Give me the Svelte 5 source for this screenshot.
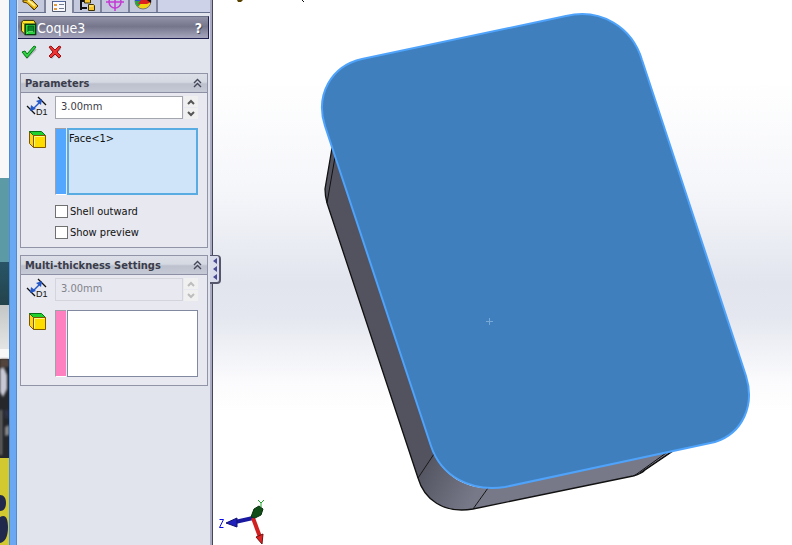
<script lang="ts">
    const tabs = ['Feature tree', 'Properties', 'Configurations', 'Dimensions', 'Appearances'];

    let activeTab = $state(1);
    let thickness = $state('3.00mm');
    let multiThickness = $state('3.00mm');
    let faces = $state(['Face<1>']);
    let shellOutward = $state(false);
    let showPreview = $state(false);
    let paramsOpen = $state(true);
    let multiOpen = $state(true);

    function step(delta: number) {
        const next = Math.max(0, (parseFloat(thickness) || 0) + delta);
        thickness = next.toFixed(2) + 'mm';
    }
</script>

{#snippet tabIcon(i: number)}
    <svg class="tab-icon" viewBox="0 0 20 12" aria-hidden="true">
        {#if i === 0}
            <path d="M2 0v2l4 1 7 7 4-4-6-6z" fill="#efbd18" stroke="#4d3500" />
            <path d="M7 0l7 6" stroke="#fff0a0" stroke-width="2" />
            <path d="M6 3l7 6" stroke="#8b6200" />
        {:else if i === 1}
            <path d="M3.500 -3h13v13.500h-13z" fill="#f8f8ff" stroke="#555b6e" />
            <path d="M4 0h12" stroke="#5268a0" stroke-width="2" />
            <path d="M5 3h3v2H5zM5 7h3v2H5z" fill="#e19a3c" />
            <path d="M10 3.500h5M10 7.500h5" stroke="#777d91" />
        {:else if i === 2}
            <path d="M4 -2v12M4 1h4M4 8h6" stroke="#111" stroke-width="2" fill="none" />
            <path d="M7.500 -2h5l1 1v4h-6zM11.500 4.500h5l1 1v5h-6z" fill="#f6c52c" stroke="#3c3000" />
            <path d="M12 6h4" stroke="#fff3a8" />
        {:else if i === 3}
            <circle cx="10" cy="2" r="6" fill="none" stroke="#c43bd4" stroke-width="1.500" />
            <path d="M10 -6v17M1 2h18" stroke="#c43bd4" stroke-width="1.500" />
        {:else}
            <circle cx="10" cy="1" r="8" fill="#f4d313" stroke="#777" />
            <path d="M10 1L2 1a8 8 0 0 0 3 6z" fill="#28a53d" />
            <path d="M2 1V-5h8v6z" fill="#2a55d4" />
            <path d="M5 4l5-7 8 5-4 2z" fill="#dc2020" />
            <path d="M11 -2l7 5V-3z" fill="#111" />
        {/if}
    </svg>
{/snippet}

{#snippet dimensionIcon()}
    <svg class="row-icon" viewBox="0 0 20 21" aria-hidden="true">
        <path d="M11 1l8 8M0 10l8 8" stroke="#111" stroke-width="1.300" />
        <path d="M5 14L14 5" stroke="#2458c8" stroke-width="1.500" />
        <path d="M15 3l-1 6-5-4zM3 15l1-6 5 4z" fill="#2458c8" />
        <text x="9" y="19" class="icon-text">D1</text>
    </svg>
{/snippet}

{#snippet cubeIcon()}
    <svg class="row-icon cube" viewBox="0 0 20 21" aria-hidden="true">
        <path d="M2.500 3.500l4 4v12l-4-4z" fill="#ffd51c" stroke="#805600" />
        <path d="M2.500 3.500h12l4 4h-12z" fill="#20d02c" stroke="#087018" />
        <path d="M6.500 7.500h12v12h-12z" fill="#ffdc00" stroke="#805600" />
        <path d="M7.500 18.500v-10h10" fill="none" stroke="#fff78a" />
    </svg>
{/snippet}

{#snippet chevrons()}
    <svg class="chevrons" viewBox="0 0 9 10" aria-hidden="true">
        <path d="M1 5l3.500-3.500L8 5M1 9l3.500-3.500L8 9" fill="none" stroke="#444859" stroke-width="1.400" />
    </svg>
{/snippet}

{#snippet spinner(disabled: boolean)}
    <div class="spinner">
        <button aria-label="Increase" {disabled} onclick={() => step(1)}>
            <svg viewBox="0 0 8 6"><path d="M1 5l3-3 3 3" /></svg>
        </button>
        <button aria-label="Decrease" {disabled} onclick={() => step(-1)}>
            <svg viewBox="0 0 8 6"><path d="M1 1l3 3 3-3" /></svg>
        </button>
    </div>
{/snippet}

<div class="app">
    <div class="desktop" aria-hidden="true">
        <svg viewBox="0 0 9 545" preserveAspectRatio="none">
            <defs>
                <linearGradient id="sea" x2="0" y2="1">
                    <stop stop-color="#285567" /><stop offset="1" stop-color="#24434b" />
                </linearGradient>
                <linearGradient id="haze" x2="0" y2="1">
                    <stop stop-color="#c4c7c7" /><stop offset="1" stop-color="#e4e4e4" />
                </linearGradient>
                <filter id="soft"><feGaussianBlur stdDeviation="1" /></filter>
            </defs>
            <path d="M0 0h9v545H0z" fill="#f8f8f8" />
            <path d="M0 178h9v84H0z" fill="#5c9aa6" />
            <path d="M0 262h9v43H0z" fill="url(#sea)" />
            <path d="M0 305h9v44H0z" fill="url(#haze)" />
            <path d="M0 359h9v99H0z" fill="#25272b" />
            <g filter="url(#soft)">
                <path d="M0 359h9v8H4l-4 5z" fill="#53443d" />
                <path d="M0 369l4-1 3 7v14l-4 8-3-5z" fill="#c8c8d4" />
                <path d="M0 410h2v45H0z" fill="#74756f" />
                <path d="M5 427l4-2v10l-4 1z" fill="#8b8b8d" />
                <path d="M4 410h5v8H5z" fill="#303044" />
            </g>
            <path d="M0 458h9v87H0z" fill="#d2c931" />
            <path d="M0 495c4 0 6 3 6 8s-2 8-6 8zM0 517c5-3 8 0 8 10s-3 15-8 16z" fill="#20294b" />
        </svg>
    </div>
    <div class="window-edge"></div>

    <aside class="panel">
        <div class="tabs" role="tablist">
            {#each tabs as tab, i}
                <button role="tab" class="tab" class:active={activeTab === i} aria-selected={activeTab === i} aria-label={tab} onclick={() => (activeTab = i)}>
                    {@render tabIcon(i)}
                </button>
            {/each}
        </div>

        <header class="title">
            <svg class="title-icon" viewBox="0 0 18 18" aria-hidden="true">
                <path d="M1.500 3.500l2-2h11l2 3v12h-11l-4-4z" fill="#ffe52b" stroke="#262500" />
                <path d="M2 3.500l3 2v10" fill="none" stroke="#b29700" />
                <path d="M5.500 5.500h11v11h-11z" fill="#26d83e" stroke="#063910" stroke-width="1.500" />
                <path d="M8.500 7.500h6v6h-6z" fill="#08862a" stroke="#07551b" />
                <path d="M7 15.500l2-2h5" fill="none" stroke="#8bff88" />
            </svg>
            <h1>Coque3</h1>
            <button class="help" aria-label="Help">?</button>
        </header>

        <div class="actions">
            <button aria-label="OK">
                <svg viewBox="0 0 16 14">
                    <path d="M3 9l3 4 9-9" fill="none" stroke="#b4b7c0" stroke-width="2" />
                    <path d="M1 7l3-1 2 3 7-8 2 1-9 11z" fill="#32d342" stroke="#08771a" />
                </svg>
            </button>
            <button aria-label="Cancel">
                <svg viewBox="0 0 16 14">
                    <path d="M4 3l9 10M13 3L4 13" stroke="#b4b7c0" stroke-width="3" />
                    <path d="M2 2l2-1 4 4 4-4 2 1-4 5 4 4-2 2-4-4-4 4-2-2 4-4z" fill="#ed3434" stroke="#981010" />
                </svg>
            </button>
        </div>

        <section class="group">
            <button class="group-head" aria-expanded={paramsOpen} onclick={() => (paramsOpen = !paramsOpen)}>
                <span>Parameters</span>
                {@render chevrons()}
            </button>
            {#if paramsOpen}
                <div class="group-body">
                    <div class="row">
                        {@render dimensionIcon()}
                        <div class="field">
                            <input type="text" aria-label="Thickness" bind:value={thickness} />
                            {@render spinner(false)}
                        </div>
                    </div>
                    <div class="row">
                        {@render cubeIcon()}
                        <div class="selection">
                            <div class="swatch blue"></div>
                            <ul class="list focused" role="listbox" aria-label="Faces to remove">
                                {#each faces as face}
                                    <li role="option" aria-selected="false">{face}</li>
                                {/each}
                            </ul>
                        </div>
                    </div>
                    <div class="checks">
                        <label><input type="checkbox" bind:checked={shellOutward} />Shell outward</label>
                        <label><input type="checkbox" bind:checked={showPreview} />Show preview</label>
                    </div>
                </div>
            {/if}
        </section>

        <section class="group">
            <button class="group-head" aria-expanded={multiOpen} onclick={() => (multiOpen = !multiOpen)}>
                <span>Multi-thickness Settings</span>
                {@render chevrons()}
            </button>
            {#if multiOpen}
                <div class="group-body">
                    <div class="row">
                        {@render dimensionIcon()}
                        <div class="field">
                            <input type="text" aria-label="Multi-thickness" bind:value={multiThickness} disabled />
                            {@render spinner(true)}
                        </div>
                    </div>
                    <div class="row">
                        {@render cubeIcon()}
                        <div class="selection">
                            <div class="swatch pink"></div>
                            <ul class="list" role="listbox" aria-label="Multi-thickness faces"></ul>
                        </div>
                    </div>
                </div>
            {/if}
        </section>

        <button class="collapse" aria-label="Collapse panel">
            <svg viewBox="0 0 4 22"><path d="M4 0v6L0 3zM4 8v6l-4-3zM4 16v6l-4-3z" fill="#4a4a96" /></svg>
        </button>
    </aside>

    <main class="viewport">
        <svg viewBox="213 0 579 545" preserveAspectRatio="xMinYMin slice" role="img" aria-label="Model view">
            <defs>
                <linearGradient id="corner" x1="420" y1="465" x2="475" y2="495" gradientUnits="userSpaceOnUse">
                    <stop stop-color="#52535f" /><stop offset="1" stop-color="#777989" />
                </linearGradient>
            </defs>

            <!-- remains of the view toolbar -->
            <path d="M237 0h6l-2 2h-3z" fill="#5a4300" />
            <path d="M302 0l2 2" stroke="#111" />

            <!-- body sides -->
            <path d="M332 148L325 189Q325 196 327 203L418 478L434 454L336 150z" fill="#52535f" />
            <path d="M434 454L418 478C424 499 443 514 473 509L488 488C464 488 444 475 434 454z" fill="url(#corner)" />
            <path d="M488 488L473 509L633 476Q641 474 645 470L673 451z" fill="#777989" />
            <path d="M332 148L325 189Q325 196 327 203L418 478C424 499 443 514 473 509L633 476Q641 474 645 470L673 451" fill="none" stroke="#111" stroke-width="1.300" />
            <path d="M335 157L327 203M434 454L418 478M488 488L473 509M666 453L634 476M671 452L640 473" fill="none" stroke="#111" />

            <!-- selected face -->
            <path
                d="M362 59L566 16C601 8 632 27 642 60L746 376C755 405 743 433 715 442L505 487C470 492 441 476 431 446L325 126C315 95 331 66 362 59z"
                fill="#3f7fbd" stroke="#4fa3fb" stroke-width="2"
            />
            <path d="M486 321.500h7M489.500 318v7" stroke="#78a8d7" />

            <!-- orientation triad -->
            <path d="M253 518L235 522" stroke="#1818a0" stroke-width="4" />
            <path d="M226 523l11-5v9z" fill="#2020bd" stroke="#101070" />
            <path d="M253 518l7 19" stroke="#d02020" stroke-width="4" />
            <path d="M256 537l7-3-1 10z" fill="#e02424" stroke="#761010" />
            <path d="M251 517l3-8 5-3 4 3-2 6-6 3z" fill="#124c19" stroke="#08310d" />
            <path d="M219.500 519.500h4l-4 8h4" fill="none" stroke="#0808e8" />
            <path d="M258 500l3 3 3-3M261 503v4" fill="none" stroke="#20a828" />
        </svg>
    </main>
</div>

<style>
    :global(body) {
        margin: 0;
    }

    .app {
        display: flex;
        min-height: 100vh;
        overflow: hidden;
        font-family: 'DejaVu Sans Condensed', Tahoma, sans-serif;
        font-size: 11px;
        color: #111;
    }

    button {
        padding: 0;
        border: 0;
        background: none;
        color: inherit;
        font: inherit;
    }

    svg {
        display: block;
    }

    .desktop {
        flex: 0 0 9px;
        position: relative;
    }

    .desktop svg {
        position: absolute;
        width: 100%;
        height: 100%;
    }

    .window-edge {
        flex: 0 0 6px;
        background: #6aa8f4;
        border: solid #4f8bd2;
        border-width: 0 1px;
    }

    .panel {
        position: relative;
        z-index: 1;
        box-sizing: border-box;
        flex: 0 0 196px;
        min-width: 0;
        padding: 0 2px 0 1px;
        background: #e1e4ed;
        border-right: 1px solid #46465a;
        box-shadow: inset -2px 0 #aaaac2;
    }

    .tabs {
        display: flex;
        height: 12px;
        background: #cdd2e8;
        border-bottom: 1px solid #64708e;
    }

    .tab {
        width: 28px;
        height: 12px;
        box-sizing: border-box;
        border-right: 2px solid #7d849c;
        background: #c4c9de;
        overflow: hidden;
    }

    .tab.active {
        height: 13px;
        background: #e1e4ed;
    }

    .tab-icon {
        width: 20px;
        height: 12px;
        margin: 0 auto;
    }

    .title {
        display: flex;
        align-items: center;
        box-sizing: border-box;
        height: 23px;
        margin: 3px 1px 0 0;
        padding: 0 6px 0 2px;
        border: solid #1c1c4e;
        border-width: 1px 1px 1px 0;
        border-top-color: #6b7088;
        background: linear-gradient(#9293a8, #75768c 45%, #a5a5bd);
        color: #fff;
    }

    .title-icon {
        width: 17px;
        height: 17px;
    }

    h1 {
        flex: 1;
        margin: 0;
        font-size: 14px;
        font-weight: normal;
        line-height: 16px;
    }

    .help {
        font-size: 14px;
        font-weight: bold;
        line-height: 16px;
        text-shadow: 1px 1px #4d4e60;
    }

    .actions {
        display: flex;
        gap: 10px;
        padding: 6px 3px 14px;
    }

    .actions svg {
        width: 16px;
        height: 14px;
    }

    .group {
        margin: 0 2px 7px;
        border: 1px solid #9194a6;
        background: #e7e8f0;
    }

    .group-head {
        display: flex;
        align-items: center;
        justify-content: space-between;
        box-sizing: border-box;
        width: 100%;
        height: 19px;
        padding: 0 5px 0 4px;
        border-bottom: 1px solid #8d90a4;
        background: linear-gradient(#dcdfe8, #d5d9e2 45%, #bcc1cd 55%, #c6cad6);
        color: #3a3c4a;
        font-weight: bold;
    }

    .chevrons {
        width: 9px;
        height: 10px;
    }

    .group-body {
        display: flex;
        flex-direction: column;
        gap: 9px;
        padding: 3px 9px 8px 6px;
    }

    .row {
        display: flex;
        align-items: flex-start;
        gap: 8px;
    }

    .row-icon {
        flex: none;
        width: 20px;
        height: 21px;
        overflow: visible;
    }

    .icon-text {
        font: 9px 'Liberation Sans', sans-serif;
        fill: #111;
    }

    .field {
        display: flex;
        flex: 1;
        gap: 1px;
        min-width: 0;
    }

    .field input {
        flex: 1;
        min-width: 0;
        box-sizing: border-box;
        height: 23px;
        margin: 0;
        padding: 0 5px 2px;
        border: 1px solid #a4a6ae;
        background: #fff;
        color: #3c3c48;
        font: inherit;
    }

    .field input:disabled {
        border-color: #fff;
        outline: 1px solid #d4d5db;
        outline-offset: -1px;
        background: #e7e8f0;
        color: #83848c;
    }

    .spinner {
        display: flex;
        flex-direction: column;
        gap: 1px;
        width: 14px;
    }

    .spinner button {
        display: flex;
        flex: 1;
        align-items: center;
        justify-content: center;
        background: #f0f0f0;
    }

    .spinner svg {
        width: 8px;
        height: 6px;
    }

    .spinner path {
        fill: none;
        stroke: #555;
        stroke-width: 2;
    }

    .spinner button:disabled path {
        stroke: #bdbdbd;
    }

    .selection {
        display: flex;
        flex: 1;
        gap: 1px;
        height: 67px;
    }

    .swatch {
        box-sizing: border-box;
        width: 11px;
        border: solid #a0a0a8;
        border-width: 1px 0 0 1px;
        border-bottom: 1px solid #fff;
    }

    .blue {
        background: #54a7ff;
    }

    .pink {
        background: #ff80c0;
    }

    .list {
        flex: 1;
        box-sizing: border-box;
        margin: 0;
        padding: 2px 1px;
        border: 1px solid #8189a0;
        background: #fff;
        list-style: none;
        line-height: 16px;
    }

    .list.focused {
        border: 2px solid #58ace2;
        padding: 1px 0;
        background: #cfe4f8;
    }

    .checks {
        display: flex;
        flex-direction: column;
        gap: 7px;
        padding-left: 28px;
    }

    .checks label {
        display: flex;
        align-items: center;
        gap: 2px;
        height: 14px;
    }

    .checks input {
        appearance: none;
        box-sizing: border-box;
        width: 13px;
        height: 13px;
        margin: 0;
        border: 1px solid #707070;
        background: #fff;
    }

    .checks input:checked {
        background: #54a7ff;
        box-shadow: inset 0 0 0 2px #fff;
    }

    .collapse {
        position: absolute;
        top: 255px;
        right: -9px;
        display: flex;
        align-items: center;
        justify-content: center;
        box-sizing: border-box;
        width: 11px;
        height: 29px;
        border: solid #55566c;
        border-width: 1px 2px 2px 0;
        border-radius: 0 4px 4px 0;
        background: #d9dcea;
    }

    .collapse svg {
        width: 4px;
        height: 22px;
    }

    .viewport {
        position: relative;
        flex: 1;
        min-width: 0;
        background: linear-gradient(#fff 15%, #f5f6fa 35%, #e2e5ee 52%, #e4e7ef 58%, #fbfbfd 70%, #fff 76%);
    }

    .viewport svg {
        position: absolute;
        width: 100%;
        height: 100%;
    }
</style>
